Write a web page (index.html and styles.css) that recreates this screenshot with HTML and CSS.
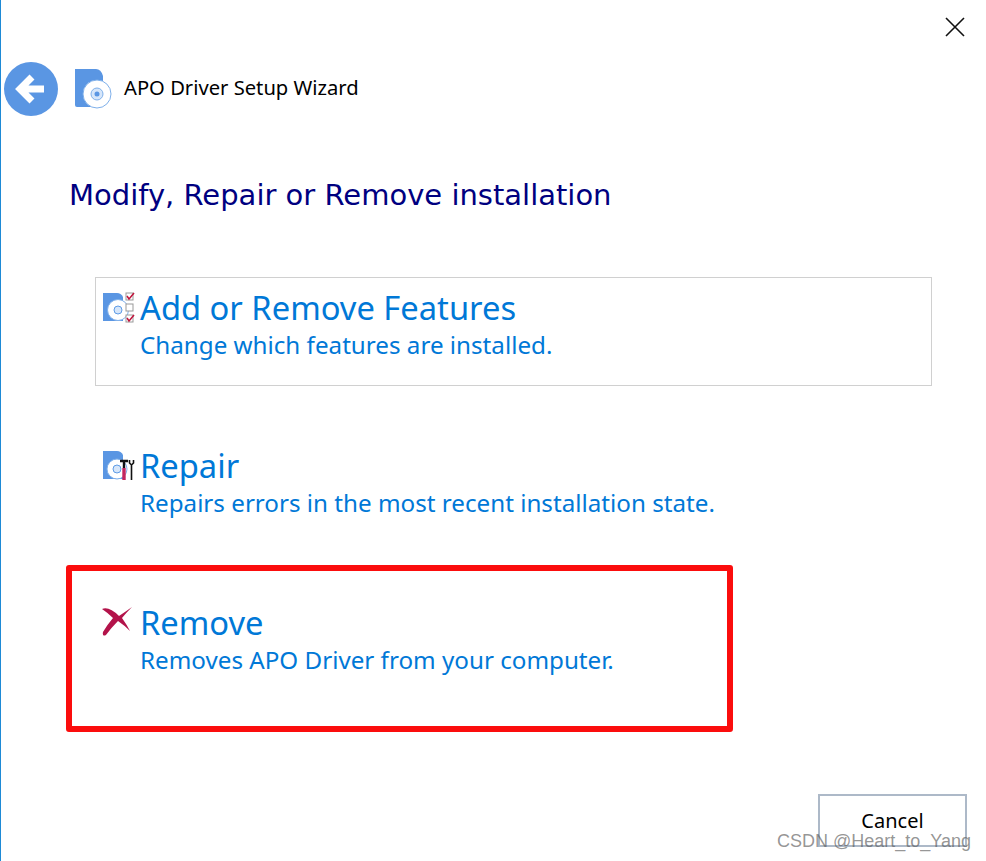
FILE: index.html
```html
<!DOCTYPE html>
<html lang="en">
<head>
    <meta charset="UTF-8">
    <title>APO Driver Setup Wizard</title>
    <link rel="stylesheet" href="styles.css">
</head>
<body>
    <div class="wizard">
        <div class="close-row">
            <svg class="close-icon" width="20" height="20" viewBox="0 0 20 20">
                <path d="M1 1 L19 19 M19 1 L1 19" stroke="#111" stroke-width="1.6" fill="none"/>
            </svg>
        </div>

        <div class="header">
            <svg class="back-icon" width="56" height="56" viewBox="0 0 56 56">
                <circle cx="28" cy="28" r="27" fill="#5a96e3"/>
                <path d="M41 28 H19 M29 16 L17 28 L29 40" stroke="#fff" stroke-width="7" fill="none"/>
            </svg>
            <svg class="app-icon" width="38" height="42" viewBox="0 0 38 42">
                <path d="M1 1 H22 Q27 1 29 8 L29 39 H3 Q1 39 1 37 Z" fill="#5a96e3"/>
                <circle cx="23" cy="26" r="14" fill="#fff" stroke="#7fb0ea"/>
                <circle cx="23" cy="26" r="6" fill="#d6e6fa" stroke="#7fb0ea"/>
                <circle cx="23" cy="26" r="2.5" fill="#5a96e3"/>
            </svg>
            <span class="app-title">APO Driver Setup Wizard</span>
        </div>

        <h1 class="heading">Modify, Repair or Remove installation</h1>

        <div class="options">
            <div class="option option-active">
                <svg class="option-icon" width="34" height="32" viewBox="0 0 34 32">
                    <path d="M1 1 H15 Q19 1 21 5 V29 H1 Z" fill="#5a96e3"/>
                    <circle cx="16" cy="18" r="10.5" fill="#fff" stroke="#7fb0ea"/>
                    <circle cx="16" cy="18" r="4" fill="#d6e6fa" stroke="#5f9ce6"/>
                    <rect x="24" y="1" width="7" height="7" fill="#fff" stroke="#999"/>
                    <path d="M25 4 L27 7 L32 1" stroke="#c0143c" stroke-width="1.5" fill="none"/>
                    <rect x="24" y="12" width="7" height="7" fill="#fff" stroke="#999"/>
                    <rect x="24" y="23" width="7" height="7" fill="#fff" stroke="#999"/>
                    <path d="M25 26 L27 29 L32 23" stroke="#c0143c" stroke-width="1.5" fill="none"/>
                </svg>
                <div class="option-text">
                    <div class="option-title">Add or Remove Features</div>
                    <div class="option-desc">Change which features are installed.</div>
                </div>
            </div>

            <div class="option">
                <svg class="option-icon" width="34" height="32" viewBox="0 0 34 32">
                    <path d="M1 1 H15 Q19 1 21 5 V29 H1 Z" fill="#5a96e3"/>
                    <circle cx="15" cy="19" r="10" fill="#fff" stroke="#7fb0ea"/>
                    <circle cx="15" cy="19" r="4" fill="#d6e6fa" stroke="#5f9ce6"/>
                    <path d="M18 11 H26 M22 11 V18" stroke="#111" stroke-width="2.4" fill="none"/>
                    <path d="M22 18 V30" stroke="#c4265e" stroke-width="3.4" fill="none"/>
                    <path d="M27.5 10 V13 L29.5 15 V30 M31.5 10 V13 L29.5 15" stroke="#111" stroke-width="1.6" fill="none"/>
                </svg>
                <div class="option-text">
                    <div class="option-title">Repair</div>
                    <div class="option-desc">Repairs errors in the most recent installation state.</div>
                </div>
            </div>

            <div class="option">
                <svg class="option-icon" width="34" height="32" viewBox="0 0 34 32">
                    <path d="M0 2 Q7 -1 17 9 Q23 5 30 0 Q24 6 20 11 Q25 18 28 24 Q22 18 16 14 Q9 21 4 28 Q0 30 1 25 Q5 18 11 11 Q6 6 0 2 Z" fill="#b3134a"/>
                </svg>
                <div class="option-text">
                    <div class="option-title">Remove</div>
                    <div class="option-desc">Removes APO Driver from your computer.</div>
                </div>
            </div>
        </div>

        <div class="footer">
            <button class="cancel-btn">Cancel</button>
        </div>

        <div class="annotation"></div>
        <div class="watermark">CSDN @Heart_to_Yang</div>
    </div>
</body>
</html>
```

FILE: styles.css
```css
html, body {
    margin: 0;
    padding: 0;
    background: #fff;
}
.wizard {
    position: relative;
    box-sizing: border-box;
    width: 986px;
    height: 861px;
    overflow: hidden;
    border-left: 1px solid #1e8ad6;
    font-family: "Noto Sans", "Open Sans", sans-serif;
}
.close-row {
    display: flex;
    justify-content: flex-end;
    padding: 17px 21px 0 0;
}
.close-icon {
    display: block;
}
.header {
    display: flex;
    align-items: center;
    margin-top: 24px;
    padding-left: 2px;
}
.back-icon {
    display: block;
}
.app-icon {
    display: block;
    margin-left: 15px;
}
.app-title {
    margin: 0 0 5px 12px;
    font-size: 20.2px;
    color: #000;
}
.heading {
    margin: 58px 0 0 68px;
    font-family: "DejaVu Sans", sans-serif;
    font-size: 29px;
    font-weight: 400;
    line-height: 40px;
    color: #000080;
}
.options {
    display: flex;
    flex-direction: column;
    gap: 48.5px;
    margin: 62px 0 0 94px;
    width: 837px;
}
.option {
    display: flex;
    box-sizing: border-box;
    height: 109px;
    padding: 14px 0 0 6px;
    border: 1px solid transparent;
    color: #0078d7;
}
.option-active {
    border-color: #d0d0d0;
}
.option-icon {
    display: block;
    flex: none;
}
.option-text {
    margin-left: 4px;
    margin-top: -5px;
}
.option-title {
    font-size: 32.7px;
    line-height: 42px;
}
.option-desc {
    font-size: 24.2px;
    line-height: 32px;
}
.footer {
    display: flex;
    justify-content: flex-end;
    position: absolute;
    right: 19px;
    top: 794px;
}
.cancel-btn {
    box-sizing: border-box;
    width: 149px;
    height: 53px;
    padding: 0;
    background: #fff;
    border: 2px solid #adb9c8;
    font-family: inherit;
    font-size: 20px;
    color: #000;
}
.annotation {
    position: absolute;
    left: 65px;
    top: 565px;
    width: 667px;
    height: 167px;
    box-sizing: border-box;
    border: 6px solid #fb0d0d;
    border-radius: 3px;
}
.watermark {
    position: absolute;
    right: 15px;
    top: 831px;
    font-family: "Liberation Sans", sans-serif;
    font-size: 18px;
    color: rgba(90, 90, 90, 0.65);
}
```
